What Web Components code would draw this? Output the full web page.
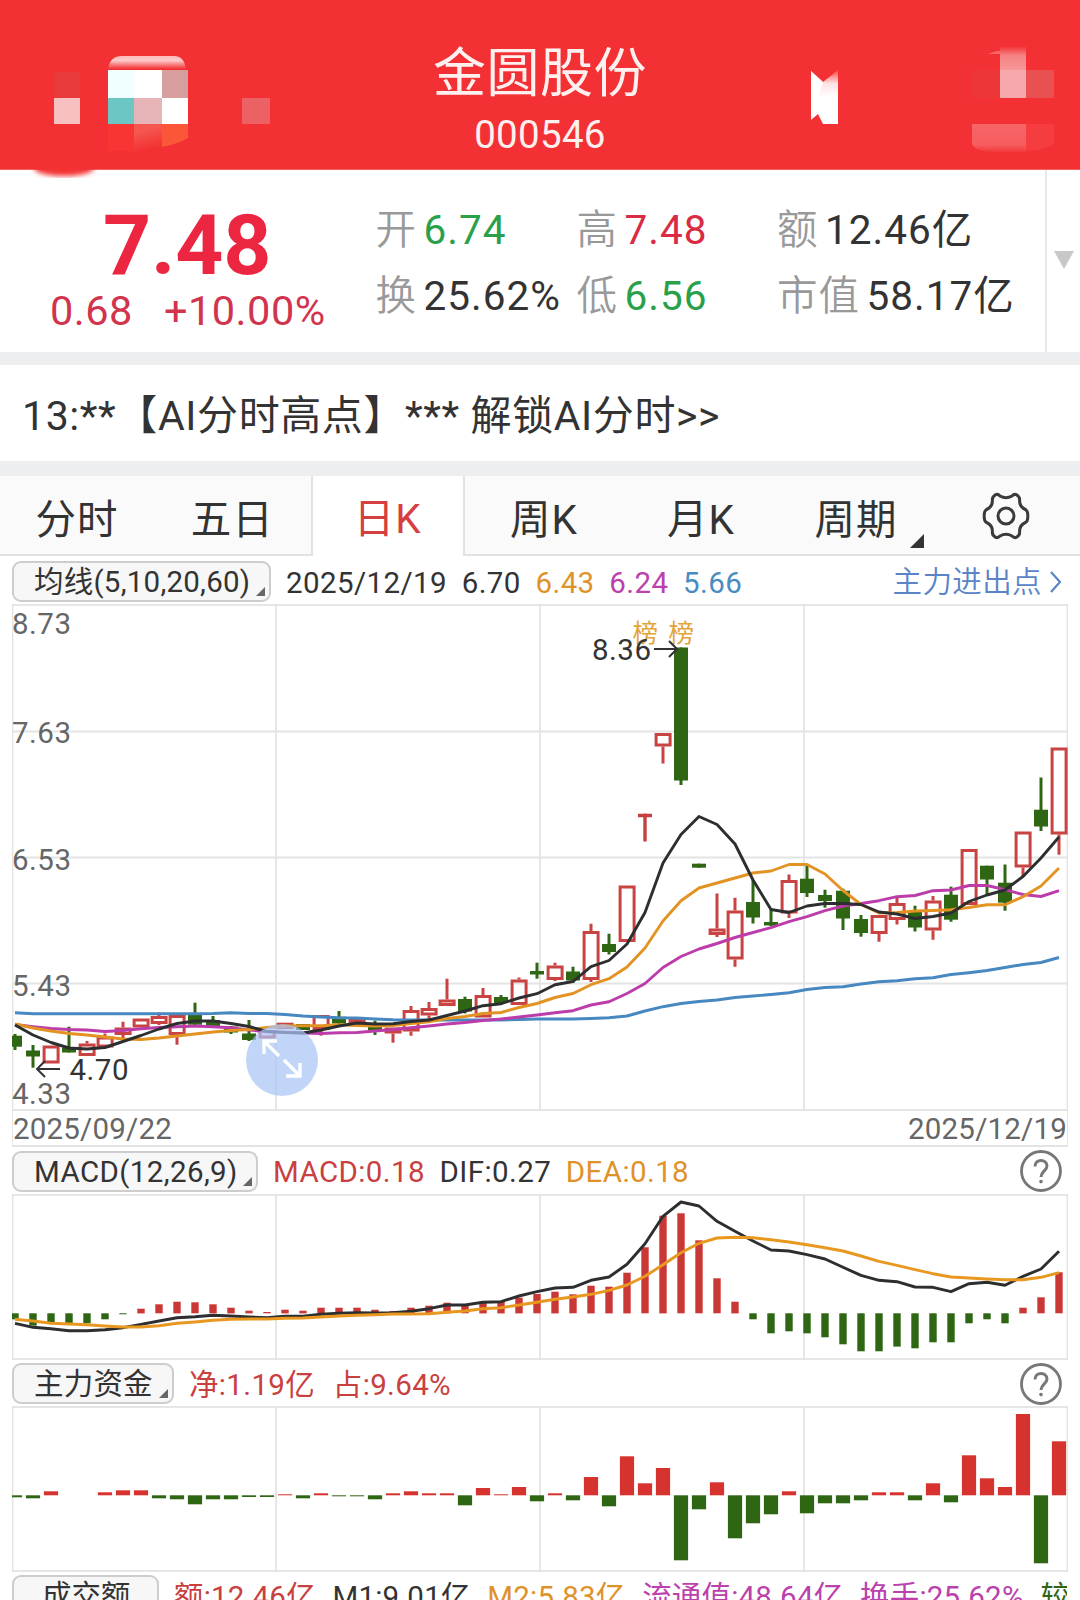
<!DOCTYPE html>
<html lang="zh-CN">
<head>
<meta charset="utf-8">
<meta name="viewport" content="width=device-width">
<title>金圆股份 000546</title>
<style>
    html{
        overflow:hidden;
    }
    body{
        margin:0;
        width:1080px;
        height:1600px;
        overflow:hidden;
        background:#fff;
        color:#333;
        font-family:Roboto,"Noto Sans CJK SC",sans-serif;
    }
</style>
</head>
<body>
<stock-page></stock-page>

<script>
const makeTemplate = (html) => {
    const template = document.createElement('template')
    template.innerHTML = html
    return template
}

class BaseElement extends HTMLElement {
    constructor () {
        super();
        this.attachShadow({mode:'open'})
        this.shadowRoot.appendChild(this.constructor.template.content.cloneNode(true))
    }
}

/* ---------- red title bar ---------- */
class StockHeader extends BaseElement {
    static template = makeTemplate(`
<style>
    :host{
        display:grid;
        grid-template-columns:400px 280px 400px;
        height:169px;
        border-bottom:1px solid #f0605f;
        background:#f33033;
        color:#fff0f0;
    }
    svg{
        display:block;
        overflow:visible;
    }
    .title{
        display:flex;
        flex-direction:column;
        align-items:center;
        padding-top:43px;
    }
    .name{
        font-size:53px;
        line-height:62px;
        letter-spacing:.5px;
    }
    .code{
        margin-top:4px;
        font-size:38.5px;
        line-height:51px;
        letter-spacing:.3px;
    }
</style>
<svg width="400" height="169">
    <defs>
        <linearGradient id="cap" x1="0" y1="0" x2="0" y2="1">
            <stop offset="0" stop-color="#fbb"/><stop offset=".35" stop-color="#fbc9c9"/><stop offset="1" stop-color="#f33033"/>
        </linearGradient>
        <linearGradient id="base" x1="0" y1="0" x2=".25" y2="1">
            <stop offset=".3" stop-color="#f5564f"/><stop offset="1" stop-color="#f33033"/>
        </linearGradient>
        <filter id="soft"><feGaussianBlur stdDeviation="2.5"/></filter>
        <clipPath id="below"><rect x="0" y="169" width="200" height="20"/></clipPath>
    </defs>
    <g shape-rendering="crispEdges">
        <rect x="54" y="72" width="26" height="26" fill="#e8393b"/>
        <rect x="54" y="98" width="26" height="26" fill="#f9c0c2"/>
        <rect x="108" y="70" width="26" height="28" fill="#f0ffff"/>
        <rect x="134" y="70" width="28" height="28" fill="#fff"/>
        <rect x="162" y="70" width="26" height="28" fill="#d69e9c"/>
        <rect x="108" y="98" width="26" height="26" fill="#6cc6c4"/>
        <rect x="134" y="98" width="28" height="26" fill="#e6b3b6"/>
        <rect x="162" y="98" width="26" height="26" fill="#fff"/>
        <rect x="108" y="124" width="26" height="27" fill="#f93534"/>
        <rect x="242" y="98" width="28" height="26" fill="#ec6164"/>
    </g>
    <path d="M108 69Q110 56 122 56H174Q184 56 186 69Z" fill="url(#cap)"/>
    <path d="M134 124H162V147L134 152Z" fill="url(#base)"/>
    <path d="M162 124H188V138Q178 144 162 147Z" fill="#fb5638"/>
    <ellipse cx="64" cy="168" rx="30" ry="8" fill="#f33033" filter="url(#soft)" clip-path="url(#below)"/>
</svg>
<div class="title">
    <div class="name"><slot name="name"></slot></div>
    <div class="code"><slot name="code"></slot></div>
</div>
<svg width="400" height="169">
    <defs>
        <linearGradient id="fade" x1="0" y1="0" x2="0" y2="1">
            <stop offset="0" stop-color="#f33033"/><stop offset=".4" stop-color="#f58283"/><stop offset="1" stop-color="#f59799"/>
        </linearGradient>
        <linearGradient id="notch" x1="0" y1="0" x2="0" y2="1">
            <stop offset="0" stop-color="#f44"/><stop offset=".25" stop-color="#ffe3e5"/><stop offset=".5" stop-color="#fff"/><stop offset="1" stop-color="#fff"/>
        </linearGradient>
        <linearGradient id="foot" x1="0" y1="0" x2="0" y2="1">
            <stop offset="0" stop-color="#f76668"/><stop offset=".75" stop-color="#f75c5e"/><stop offset="1" stop-color="#f4383a"/>
        </linearGradient>
    </defs>
    <path d="M131 71L143 82L158 70V124H143L138 114L131 120Z" fill="url(#notch)"/>
    <path d="M131 71L143 82L138 97H131Z" fill="#fff"/>
    <path d="M308 54Q322 47 336 54Z" fill="#f66"/>
    <rect x="320" y="46" width="26" height="24" fill="url(#fade)"/>
    <rect x="320" y="70" width="26" height="28" fill="#f6a9ad"/>
    <rect x="292" y="70" width="28" height="28" fill="#ec3638"/>
    <rect x="346" y="70" width="28" height="28" fill="#e85052"/>
    <path d="M292 124H346V152H308Q294 150 292 144Z" fill="url(#foot)"/>
    <path d="M346 124H374V144Q366 150 346 151Z" fill="#f53c3f"/>
</svg>
`)
}
window.customElements.define('stock-header',StockHeader)

/* ---------- label + value ---------- */
class QuoteItem extends BaseElement {
    static template = makeTemplate(`
<style>
    :host{
        display:flex;
        align-items:baseline;
        font-size:40.5px;
        line-height:66px;
        letter-spacing:1px;
        white-space:nowrap;
    }
    .label{
        margin-right:6.5px;
        color:#999;
        font-weight:350;
    }
    :host([up]) .value{
        color:#d92b44;
    }
    :host([down]) .value{
        color:#2aa04a;
    }
</style>
<span class="label"></span><span class="value"><slot></slot></span>
`)
    connectedCallback(){
        this.shadowRoot.querySelector('.label').textContent = this.getAttribute('label')
    }
}
window.customElements.define('quote-item',QuoteItem)

class StockQuote extends BaseElement {
    static template = makeTemplate(`
<style>
    :host{
        display:flex;
        height:182px;
        background:#fff;
    }
    .price{
        width:375.5px;
        color:#ec2640;
    }
    .last{
        margin-top:27px;
        padding-left:103px;
        font-size:84px;
        line-height:94px;
        font-weight:700;
        letter-spacing:-.2px;
    }
    .last span{
        position:relative;
        top:2px;
    }
    .change{
        display:flex;
        gap:31px;
        margin-top:-5px;
        padding-left:50px;
        font-size:41.5px;
        line-height:50px;
        letter-spacing:.5px;
        color:#d1344c;
    }
    .grid{
        flex:1;
        display:grid;
        grid-template-columns:201px 200.5px 1fr;
        grid-auto-rows:66px;
        align-content:start;
        padding-top:27px;
    }
    .more{
        width:33px;
        padding-bottom:3px;
        border-left:2px solid #e8e8e8;
        display:flex;
        align-items:center;
        justify-content:center;
    }
</style>
<div class="price">
    <div class="last"><span>7.48</span></div>
    <div class="change"><span>0.68</span><span>+10.00%</span></div>
</div>
<div class="grid">
    <quote-item label="开" down>6.74</quote-item>
    <quote-item label="高" up>7.48</quote-item>
    <quote-item label="额">12.46亿</quote-item>
    <quote-item label="换">25.62%</quote-item>
    <quote-item label="低" down>6.56</quote-item>
    <quote-item label="市值">58.17亿</quote-item>
</div>
<div class="more"><svg width="20" height="18"><path d="M0 0H20L10 18Z" fill="#c8c8c8"/></svg></div>
`)
}
window.customElements.define('stock-quote',StockQuote)

/* ---------- notice line ---------- */
class NoticeLine extends BaseElement {
    static template = makeTemplate(`
<style>
    :host{
        display:block;
        height:96px;
        padding-left:22px;
        border-top:13px solid #edeef0;
        border-bottom:15px solid #edeef0;
        font-size:41px;
        line-height:102px;
        letter-spacing:.6px;
        white-space:nowrap;
    }
</style>
<slot></slot>
`)
}
window.customElements.define('notice-line',NoticeLine)

/* ---------- period tabs ---------- */
class PeriodTab extends BaseElement {
    static template = makeTemplate(`
<style>
    :host{
        position:relative;
        box-sizing:border-box;
        display:flex;
        align-items:center;
        justify-content:center;
        height:80px;
        padding-top:2px;
        border-bottom:2px solid #e2e2e2;
        background:#fafafa;
        font-size:40.5px;
        letter-spacing:1px;
    }
    :host([active]){
        border:solid #e2e2e2;
        border-width:0 2px;
        padding-bottom:3px;
        background:#fff;
        color:#d63f42;
    }
    :host([menu]){
        padding-left:7px;
    }
    .corner{
        display:none;
        position:absolute;
        right:2px;
        bottom:6px;
    }
    :host([menu]) .corner{
        display:block;
    }
</style>
<slot></slot>
<svg class="corner" width="14" height="14"><path d="M14 0V14H0Z" fill="#333"/></svg>
`)
}
window.customElements.define('period-tab',PeriodTab)

class PeriodTabs extends BaseElement {
    static template = makeTemplate(`
<style>
    :host{
        display:grid;
        grid-template-columns:154px 156.5px 154.5px 158px 156px 147px 1fr;
    }
    svg{
        display:block;
        margin:0 0 0 5px;
    }
</style>
<period-tab>分时</period-tab>
<period-tab>五日</period-tab>
<period-tab active>日K</period-tab>
<period-tab>周K</period-tab>
<period-tab>月K</period-tab>
<period-tab menu>周期</period-tab>
<period-tab>
    <svg width="48" height="48" viewBox="-24 -24 48 48" fill="none" stroke="#3a3a3a" stroke-width="3" stroke-linejoin="round">
        <path d="M-10.5 -21.3Q-8 -22.3 -6 -20Q0 -16.6 6 -20Q8 -22.3 10.5 -21.3Q14 -19 13.6 -16Q13.3 -9 19.5 -6.5Q22 -5 21.8 0Q22 5 19.5 6.5Q13.3 9 13.6 16Q14 19 10.5 21.3Q8 22.3 6 20Q0 16.6 -6 20Q-8 22.3 -10.5 21.3Q-14 19 -13.6 16Q-13.3 9 -19.5 6.5Q-22 5 -21.8 0Q-22 -5 -19.5 -6.5Q-13.3 -9 -13.6 -16Q-14 -19 -10.5 -21.3Z"/>
        <circle r="8"/>
    </svg>
</period-tab>
`)
}
window.customElements.define('period-tabs',PeriodTabs)

/* ---------- indicator row above each pane ---------- */
class IndicatorBar extends BaseElement {
    static template = makeTemplate(`
<style>
    :host{
        display:flex;
        align-items:center;
        box-sizing:border-box;
        height:var(--bar,46px);
        padding:var(--drop,1px) 13px 0 12px;
        font-size:29.5px;
        line-height:42px;
        letter-spacing:var(--spacing,.5px);
        white-space:nowrap;
        overflow:hidden;
    }
    .chip{
        position:relative;
        flex:none;
        box-sizing:border-box;
        width:var(--chip);
        height:41px;
        margin-right:15px;
        padding-left:var(--inset,20px);
        border:2px solid #cdcdcd;
        border-radius:9px;
        background:#f7f7f7;
        line-height:39px;
        letter-spacing:var(--chip-spacing,.4px);
    }
    .chip svg{
        position:absolute;
        right:4px;
        bottom:4px;
    }
    .values{
        flex:1;
        display:flex;
        gap:14.7px;
        padding-top:2px;
        overflow:hidden;
    }
    .help{
        display:none;
        margin-right:4px;
    }
    :host([help]) .help{
        display:block;
    }
    :host([plain]) .chip svg{
        display:none;
    }
</style>
<div class="chip"><slot name="name"></slot><svg width="9" height="9"><path d="M9 0V9H0Z" fill="#666"/></svg></div>
<div class="values"><slot></slot></div>
<svg class="help" width="44" height="44" viewBox="-22 -22 44 44" fill="none" stroke="#777" stroke-width="2.8">
    <circle r="19.5"/>
    <path d="M-6 -4.5C-6 -12.5 6 -12.5 6 -5C6 -.5 0 .5 0 6" stroke-width="3"/>
    <circle cy="10.6" r="1.8" fill="#777" stroke="none"/>
</svg>
<slot name="link"></slot>
`)
}
window.customElements.define('indicator-bar',IndicatorBar)

/* ---------- chart panes ---------- */
const STEP = 18
const FIRST = 3
const WIDTH = 1056
const xAt = (i) => FIRST + i * STEP

const polyline = (values, y, color) => {
    const points = values.map((v, i) => `${xAt(i)},${y(v).toFixed(1)}`).join(' ')
    return `<polyline points="${points}" fill="none" stroke="${color}" stroke-width="2.9" stroke-linejoin="round"/>`
}

const frame = (height, rows) => {
    const vertical = [264, 528, 792].map(x => `M${x} 0V${height}`).join('')
    const horizontal = rows.map(y => `M0 ${y}H${WIDTH}`).join('')
    return `<path d="${vertical}${horizontal}" stroke="#e4e4e4" stroke-width="1.8"/>
        <rect x=".5" y="1" width="${WIDTH - 1}" height="${height - 2}" fill="none" stroke="#e4e4e4" stroke-width="1.8"/>`
}

class ChartPane extends HTMLElement {
    constructor () {
        super();
        this.attachShadow({mode:'open'})
    }
    paint(height, content){
        this.shadowRoot.innerHTML = `
<style>
    :host{
        display:block;
        position:relative;
        width:${WIDTH}px;
        height:${height}px;
        margin-left:12px;
        font-size:29.5px;
        letter-spacing:.5px;
    }
    svg{
        display:block;
    }
    .zoom{
        position:absolute;
        left:234px;
        top:420px;
    }
</style>${content}`
    }
}

// each row: colour, body top, body bottom, high, low
const candles = [
    ['g',1035.7,1046.7,1034,1050],['g',1050.5,1056.5,1045,1067.7],['r',1045.5,1063.5,1045.5,1063.5],
    ['g',1047.5,1052.5,1026.7,1052.5],['r',1043.5,1056,1041,1056],['r',1036.5,1047.5,1033.5,1047.5],
    ['r',1027.5,1035,1021.7,1038],['r',1018.5,1027.5,1018.5,1027.5],['r',1016,1024,1012.5,1025],
    ['r',1015,1035,1015,1044.7],['g',1014,1024.7,1002.7,1026.5],['g',1020,1026,1016,1027.5],
    ['g',1026.5,1032.5,1026,1034],['g',1033.5,1040,1020,1041],['r',1030,1038.5,1030,1038.5],
    ['r',1022.7,1029,1022.7,1029],['g',1024,1030,1024,1030],['r',1015,1030,1015,1035.7],
    ['g',1016.7,1023.5,1011,1025],['r',1018.5,1024.5,1018.5,1024.5],['g',1025,1030,1020.7,1035],
    ['r',1027.5,1033.5,1027.5,1042.7],['r',1010,1031.5,1006,1035.7],['r',1008,1015.5,1002,1019],
    ['r',999.5,1006,978.7,1006],['g',999,1011.5,996.7,1013.5],['r',995,1017.5,988,1017.5],
    ['g',997,1003,995,1005],['r',979.5,1005,977.5,1005],['g',971,974.5,962.7,978.7],
    ['r',965.5,980,962.7,981],['g',971.5,980.5,966.7,983],['r',931,980,923.7,982],
    ['g',944,952,933.7,954.5],['r',885.5,942,885.5,942],['t',813.5,817.5,813.5,841.5],
    ['r',733,746.5,733,763.5],['g',647.5,780.5,647.5,785],['g',863.7,867.7,863.7,867.7],
    ['r',928.5,935,893.5,937],['r',910.5,959.5,897.7,966.7],['g',902,917.5,880,923.5],
    ['g',922,925.5,910,926],['r',880,913.5,874.5,918],['g',878.7,893,865,897],
    ['g',895,901,889.7,907.7],['g',890.7,918.5,888.7,930],['g',919,933,915,936.7],
    ['r',915,934,915,941.7],['r',903,920,896.7,924.5],['g',911.7,927.5,905.7,931.5],
    ['r',900.5,930.5,896,939.7],['g',894.7,919.7,886.7,921.7],['r',849,905,849,905],
    ['g',865.7,879.5,865.7,895.7],['g',882.7,902.7,864.5,910.7],['r',831.5,867.5,831.5,876.7],
    ['g',809.7,826.5,777.5,831],['r',747.5,834.5,747.5,854.7]
]
const ma5 = [1025,1035,1042.5,1048,1049,1047.5,1041.5,1035.5,1029,1023.5,1021,1021,1023.5,1026.5,1031.5,1032.5,1033,1030,1026,1023,1024,1023.7,1021.5,1020,1015.5,1011,1005.7,1003.7,998,993.7,984.7,981.5,966.7,960.5,944,912.5,863,834.5,816.5,824.5,844,880,909.5,912.5,906,903.5,903.5,904.5,912,914,918.5,916.5,913,901.5,895,890,876.5,858,837]
const ma10 = [1024,1028,1031,1033.5,1035,1037,1039,1039.5,1038,1036,1034,1032,1030.5,1029.5,1027.5,1026,1025.7,1025.7,1024.7,1025.5,1026,1025.5,1023.5,1021.7,1018.5,1016.5,1013.5,1012.5,1007.5,1003.5,997.5,993.5,984.7,978.7,967,948,921,900.7,888,883,878,873,871,864.5,864.5,874,890.5,904.5,913,912.5,911,910.5,909.7,907.5,904.7,904.7,896.7,886,868]
const ma20 = [1024.5,1026.7,1028.5,1029.5,1030,1031.5,1030.5,1028.7,1027.5,1026.7,1026,1026.7,1027.7,1030,1031.7,1032.3,1033,1033.5,1032.7,1032.5,1031,1029.5,1027.7,1026,1024,1022.5,1020.5,1019,1017,1015,1012.7,1010.7,1005,1001.7,993.5,983.5,967.5,956.5,949,943.5,937.5,932.5,927.7,921.7,916.7,910.7,906,903.5,900.7,896.7,895.5,890.7,890,885.5,885.5,889.7,894.5,896.5,890.7]
const ma60 = [1012.7,1013.7,1013.7,1013.7,1013.7,1013.7,1013.7,1013.7,1013.7,1013.7,1013.7,1013.5,1012.7,1013.5,1013.5,1014.5,1016,1017,1017.7,1018,1019,1019.7,1020,1020,1020,1020,1020,1020,1019.5,1019,1019,1019,1018.5,1017.7,1016,1011,1006.7,1003.5,1001.5,1000,997.5,996,994.5,992.7,989.5,987.5,986.7,984,981.7,980.7,978.7,977.7,974.5,972.7,970.5,967.5,964.5,962.5,957.5]

class KlineChart extends ChartPane {
    connectedCallback(){
        const y = (v) => v - 604
        const bars = candles.map(([kind, top, bottom, high, low], i) => {
            const x = xAt(i)
            const wick = (from, to) => to - from > .6 ? `M${x} ${y(from)}V${y(to)}` : ''
            if(kind === 'g'){
                return `<path d="${wick(high, low)}" stroke="#2e6614" stroke-width="3"/><rect x="${x - 7}" y="${y(top)}" width="14" height="${bottom - top}" fill="#2e6614"/>`
            }
            if(kind === 't'){
                return `<path d="M${x - 7} ${y(top + 2)}h14${wick(top, low)}" stroke="#c5403f" stroke-width="3.4"/>`
            }
            return `<g fill="none" stroke="#c94342" stroke-width="3"><path d="${wick(high, top)}${wick(bottom, low)}"/><rect x="${x - 6.9}" y="${y(top) + 1.5}" width="14" height="${bottom - top - 3}"/></g>`
        }).join('')
        const axis = [['8.73',29.5],['7.63',139],['6.53',265.5],['5.43',391.5],['4.33',500]]
            .map(([text, top]) => `<text x="0" y="${top}">${text}</text>`).join('')
        this.paint(507, `
<svg width="${WIDTH}" height="507">
    ${frame(507, [127.5, 253.5, 379.5])}
    <g fill="#666">${axis}</g>
    ${bars}
    ${polyline(ma60, y, '#4688bf')}
    ${polyline(ma20, y, '#bd3cab')}
    ${polyline(ma10, y, '#e29322')}
    ${polyline(ma5, y, '#2c2e30')}
    <g fill="#e3a338" font-size="25.5" letter-spacing="0"><text x="620.5" y="38">榜</text><text x="656.5" y="38">榜</text></g>
    <g fill="#333"><text x="580" y="55.5">8.36</text><text x="57.5" y="476">4.70</text></g>
    <path d="M642 45H665M657 37L665 45L657 53M48 465H25M33 457L25 465L33 473" fill="none" stroke="#333" stroke-width="2"/>
</svg>
<svg class="zoom" width="72" height="72" viewBox="-36 -36 72 72">
    <circle r="36" fill="#a9c5f7" fill-opacity=".72"/>
    <path d="M-3 -4L-18 -19M-18 -6V-19H-5M2 0L18 16M18 3V16H4" fill="none" stroke="#fff" stroke-width="3.4"/>
</svg>`)
    }
}
window.customElements.define('kline-chart',KlineChart)

const macdBars = [537,556,547,549,549,537,522,505,492,484,486,492,502,511,515,508,511,502,502,502,508,512,502,496,487,494,484,484,472,461,454,462,436,439,397,321,226,219,300,414,484,537,579,573,579,591,612,633,633,619,624,606,606,549,537,549,502,471,396]
const dif = [549,561,565,571,571,568,562,552,542,532,529,525,527,530,532,528,528,522,519,517,518,517,513,505,494,494,486,484,467,454,443,441,420,410,372,310,228,185,197,243,273,302,329,332,343,356,381,405,420,424,440,441,454,430,426,435,408,386,333]
const dea = [537,542,549,551,553,557,560,560,556,549,545,540,537,536,536,534,533,530,527,525,523,521,521,520,516,512,505,502,494,486,477,470,462,450,434,408,373,337,309,293,291,292,298,305,313,322,332,347,363,375,388,400,410,413,416,418,418,411,397]

const columns = (values, y, zero, width, up) => values.map((v, i) => {
    if(v === zero) return ''
    const top = Math.min(y(v), y(zero))
    const size = Math.max(Math.abs(y(v) - y(zero)), 1)
    const color = v < zero ? up : '#2e6614'
    return `<rect x="${xAt(i) - width / 2}" y="${top.toFixed(1)}" width="${width}" height="${size.toFixed(1)}" fill="${color}"/>`
}).join('')

class MacdChart extends ChartPane {
    connectedCallback(){
        const y = (v) => (v - 161) / 3
        this.paint(166, `
<svg width="${WIDTH}" height="166">
    ${frame(166, [])}
    ${columns(macdBars, y, 519, 7.4, '#ca3835')}
    ${polyline(dif, y, '#2c2e30')}
    ${polyline(dea, y, '#e8981f')}
</svg>`)
    }
}
window.customElements.define('macd-chart',MacdChart)

const funds = [442,445,424,436,436,427,421,421,445,448,463,448,448,441,441,433,445,430,439,439,448,430,424,430,430,466,414,433,411,454,430,451,381,469,319,400,354,631,478,397,565,520,493,424,490,460,460,451,427,427,451,400,457,316,385,411,192,640,274]

class FundChart extends ChartPane {
    connectedCallback(){
        const y = (v) => (v - 168) / 3
        this.paint(166, `
<svg width="${WIDTH}" height="166">
    ${frame(166, [])}
    ${columns(funds, y, 436, 14.2, '#d6332f')}
</svg>`)
    }
}
window.customElements.define('fund-chart',FundChart)

class DateRange extends BaseElement {
    static template = makeTemplate(`
<style>
    :host{
        box-sizing:border-box;
        display:flex;
        justify-content:space-between;
        width:1056px;
        height:36px;
        margin-left:12px;
        border:solid #e4e4e4;
        border-width:0 1px 2px;
        font-size:29.5px;
        line-height:37px;
        letter-spacing:.2px;
        color:#666;
    }
</style>
<slot></slot>
`)
}
window.customElements.define('date-range',DateRange)

/* ---------- page ---------- */
class StockPage extends BaseElement {
    static template = makeTemplate(`
<style>
    :host{
        display:block;
        width:1080px;
        height:1600px;
        overflow:hidden;
        background:#fff;
    }
    .red{ color:#c9403f; }
    .orange{ color:#e0922a; }
    .purple{ color:#bb41ac; }
    .blue{ color:#4a8cc0; }
    .green{ color:#2e6614; }
    .link{
        display:flex;
        align-items:center;
        gap:8px;
        margin-right:6px;
        color:#5b84c6;
        font-weight:350;
        letter-spacing:.4px;
    }
    .wide{
        margin-left:2px;
    }
    .share{
        margin-left:3px;
    }
</style>
<stock-header><span slot="name">金圆股份</span><span slot="code">000546</span></stock-header>
<stock-quote></stock-quote>
<notice-line>13:**【AI分时高点】*** 解锁AI分时&gt;&gt;</notice-line>
<period-tabs></period-tabs>

<indicator-bar style="--chip:259px;--bar:48px;--drop:3px;--spacing:.4px;--chip-spacing:.25px">
    <span slot="name">均线(5,10,20,60)</span>
    <span>2025/12/19</span><span>6.70</span><span class="orange">6.43</span><span class="purple">6.24</span><span class="blue">5.66</span>
    <span slot="link" class="link">主力进出点<svg width="11" height="22" fill="none" stroke="#5b84c6" stroke-width="2.2"><path d="M1 1L10 11L1 21"/></svg></span>
</indicator-bar>
<kline-chart></kline-chart>
<date-range><span>2025/09/22</span><span>2025/12/19</span></date-range>

<indicator-bar help style="--chip:246px;--bar:47px;--spacing:.4px">
    <span slot="name">MACD(12,26,9)</span>
    <span class="red">MACD:0.18</span><span>DIF:0.27</span><span class="orange">DEA:0.18</span>
</indicator-bar>
<macd-chart></macd-chart>

<indicator-bar help style="--chip:162px;--spacing:.35px;--chip-spacing:.2px">
    <span slot="name">主力资金</span>
    <span class="red">净:1.19亿</span><span class="red share">占:9.64%</span>
</indicator-bar>
<fund-chart></fund-chart>

<indicator-bar plain style="--chip:147px;--inset:28px;--spacing:.2px;--chip-spacing:0px">
    <span slot="name">成交额</span>
    <span class="red">额:12.46亿</span><span class="wide">M1:9.01亿</span><span class="orange wide">M2:5.83亿</span><span class="purple wide">流通值:48.64亿</span><span class="purple wide">换手:25.62%</span><span class="green wide">较</span>
</indicator-bar>
`)
}
window.customElements.define('stock-page',StockPage)
</script>
</body>
</html>
